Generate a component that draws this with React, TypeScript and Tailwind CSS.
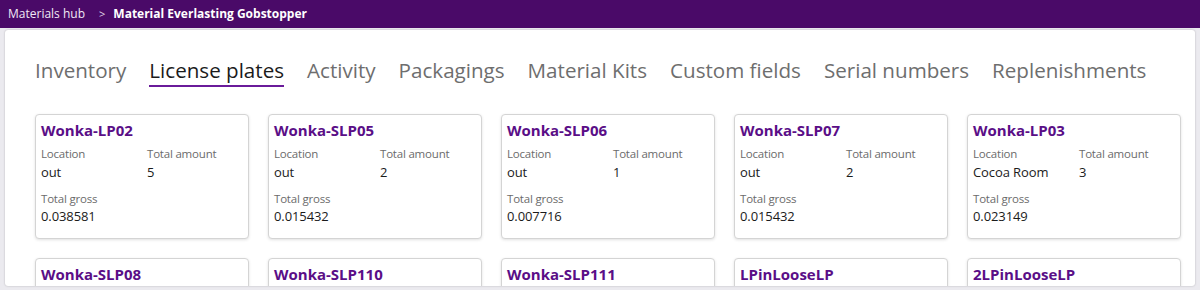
import React from "react";

type Plate = { name: string; location: string; amount: string; gross: string };

const row1: Plate[] = [
  { name: "Wonka-LP02", location: "out", amount: "5", gross: "0.038581" },
  { name: "Wonka-SLP05", location: "out", amount: "2", gross: "0.015432" },
  { name: "Wonka-SLP06", location: "out", amount: "1", gross: "0.007716" },
  { name: "Wonka-SLP07", location: "out", amount: "2", gross: "0.015432" },
  { name: "Wonka-LP03", location: "Cocoa Room", amount: "3", gross: "0.023149" },
];
const row2: Plate[] = [
  { name: "Wonka-SLP08", location: "out", amount: "1", gross: "0.007716" },
  { name: "Wonka-SLP110", location: "out", amount: "1", gross: "0.007716" },
  { name: "Wonka-SLP111", location: "out", amount: "1", gross: "0.007716" },
  { name: "LPinLooseLP", location: "out", amount: "1", gross: "0.007716" },
  { name: "2LPinLooseLP", location: "out", amount: "1", gross: "0.007716" },
];

const tabs = [
  "Inventory",
  "License plates",
  "Activity",
  "Packagings",
  "Material Kits",
  "Custom fields",
  "Serial numbers",
  "Replenishments",
];

function Card({ p }: { p: Plate }) {
  return (
    <div className="w-[214px] h-[125px] shrink-0 rounded-[4px] border border-[#d4d4d4] bg-white px-[5px] pt-[5px] shadow-[0_1px_3px_rgba(0,0,0,0.12)]">
      <div className="text-[15px] leading-[20px] font-bold text-[#5a0e87]">{p.name}</div>
      <div className="grid grid-cols-[106px_1fr] mt-[6px]">
        <div className="text-[11.5px] leading-[16px] tracking-[-0.2px] text-[#6b6b6b]">Location</div>
        <div className="text-[11.5px] leading-[16px] tracking-[-0.2px] text-[#6b6b6b]">Total amount</div>
        <div className="text-[13px] leading-[20px] tracking-[-0.1px] text-[#1b1b1b]">{p.location}</div>
        <div className="text-[13px] leading-[20px] tracking-[-0.1px] text-[#1b1b1b]">{p.amount}</div>
        <div className="col-span-2 mt-[8px] text-[11.5px] leading-[18px] tracking-[-0.2px] text-[#6b6b6b]">Total gross</div>
        <div className="col-span-2 text-[13px] leading-[16px] tracking-[-0.1px] text-[#1b1b1b]">{p.gross}</div>
      </div>
    </div>
  );
}

export default function App() {
  return (
    <div
      className="w-[1200px] h-[290px] overflow-hidden bg-[#ebeaef] flex flex-col"
      style={{ fontFamily: '"Open Sans", "Noto Sans", sans-serif' }}
    >
      <div className="h-[28px] shrink-0 bg-[#4a0a68] flex items-center pl-[8px] text-[12px] text-white">
        <span className="text-[#f0e8f5]">Materials hub</span>
        <span className="ml-[14px] mr-[8px] text-[11px] text-[#e0d5e8]">&gt;</span>
        <span className="font-bold">Material Everlasting Gobstopper</span>
      </div>
      <div className="mx-[5px] mt-[2px] flex-1 min-h-0 overflow-hidden rounded-[3px] bg-white shadow-[0_0_2px_rgba(0,0,0,0.25)] mb-[4px]">
        <div className="flex gap-[23px] pl-[30px] pt-[26px]">
          {tabs.map((t) => (
            <div
              key={t}
              className={
                t === "License plates"
                  ? "text-[20.6px] leading-[29px] text-[#1b1b1b] border-b-2 border-[#6a1b9a]"
                  : "text-[20.6px] leading-[29px] text-[#6e6e6e] border-b-2 border-transparent"
              }
            >
              {t}
            </div>
          ))}
        </div>
        <div className="pl-[30px] pt-[27px] flex flex-col gap-[19px]">
          <div className="flex gap-[19px]">
            {row1.map((p) => (
              <Card key={p.name} p={p} />
            ))}
          </div>
          <div className="flex gap-[19px]">
            {row2.map((p) => (
              <Card key={p.name} p={p} />
            ))}
          </div>
        </div>
      </div>
    </div>
  );
}
